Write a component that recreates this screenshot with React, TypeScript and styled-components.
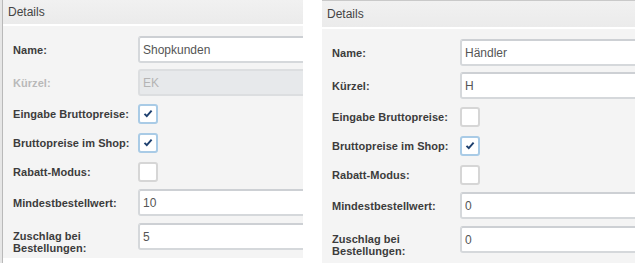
import React from 'react'
import styled, { createGlobalStyle } from 'styled-components'

const GlobalStyle = createGlobalStyle`
  html, body {
    margin: 0;
    padding: 0;
    background: #fff;
    font-family: "Liberation Sans", Arial, sans-serif;
  }
`

const Page = styled.div`
  display: flex;
  gap: 19px;
  width: 635px;
  height: 263px;
  overflow: hidden;
`

const Panel = styled.div<{ $width: number; $edge?: boolean; $top?: boolean }>`
  width: ${(p) => p.$width}px;
  flex: none;
  overflow: hidden;
  display: flex;
  flex-direction: column;
  box-sizing: border-box;
  border-top: ${(p) => (p.$top ? '1px solid #c9c9c9' : 'none')};
  border-left: ${(p) => (p.$edge ? '1px solid #b9b9b9' : 'none')};
  margin-left: ${(p) => (p.$edge ? '2px' : '0')};
  box-shadow: ${(p) => (p.$edge ? '-2px 0 0 #e6e6e6' : 'none')};
`

const Header = styled.div<{ $height: number }>`
  height: ${(p) => p.$height}px;
  line-height: ${(p) => p.$height}px;
  padding-left: 5px;
  background: linear-gradient(#f1f1f1, #ebebeb);
  border-bottom: 2px solid #ffffff;
  color: #444;
  font-size: 12px;
`

const Body = styled.div<{ $fill: boolean }>`
  background: #f4f4f4;
  padding: 7px 0 0 10px;
  height: ${(p) => (p.$fill ? 'auto' : '232px')};
  flex: ${(p) => (p.$fill ? '1' : 'none')};
  box-sizing: border-box;
`

const Row = styled.div<{ $kind: 'input' | 'check' | 'tall' }>`
  display: flex;
  align-items: ${(p) => (p.$kind === 'tall' ? 'flex-start' : 'center')};
  height: ${(p) => (p.$kind === 'check' ? 29 : 33)}px;
  padding: ${(p) => (p.$kind === 'tall' ? '4px 0 0' : '0')};
  box-sizing: border-box;
`

const Label = styled.div<{ $disabled?: boolean; $col: number; $tall?: boolean }>`
  width: ${(p) => p.$col}px;
  flex: none;
  white-space: nowrap;
  font-size: 11px;
  font-weight: bold;
  letter-spacing: 0.05px;
  line-height: 12px;
  color: ${(p) => (p.$disabled ? '#b9b9b9' : '#3c3c3c')};
  padding-top: ${(p) => (p.$tall ? '7px' : '0')};
`

const Field = styled.input`
  width: 260px;
  height: 27px;
  flex: none;
  box-sizing: border-box;
  border: 2px solid #d5d8db;
  border-top-color: #cdd0d4;
  border-radius: 3px;
  background: #fff;
  padding: 0 3px;
  font-family: "Liberation Sans", Arial, sans-serif;
  font-size: 12px;
  color: #555;
  outline: none;
  &:disabled {
    background: #e7e9eb;
    color: #b4b4b4;
    border-color: #dcdee0;
  }
`

const Box = styled.span<{ $checked: boolean }>`
  display: inline-flex;
  align-items: center;
  justify-content: center;
  width: 20px;
  height: 20px;
  box-sizing: border-box;
  border: 2px solid ${(p) => (p.$checked ? '#a9cbe6' : '#d6d6d6')};
  border-radius: 3px;
  background: #fff;
`

const Check = () => (
  <svg width="10" height="9" viewBox="0 0 10 9">
    <path d="M1.5 4.8 L3.8 7.2 L8.6 1.6" fill="none" stroke="#1d3f6e" strokeWidth="1.9" />
  </svg>
)

type Item =
  | { label: string; kind: 'input'; value: string; disabled?: boolean }
  | { label: string; kind: 'check'; checked: boolean }
  | { label: string; kind: 'tall'; value: string }

type Config = {
  width: number
  edge?: boolean
  top?: boolean
  header: number
  col: number
  fill: boolean
  items: Item[]
}

const panels: Config[] = [
  {
    width: 301,
    edge: true,
    header: 24,
    col: 125,
    fill: false,
    items: [
      { label: 'Name:', kind: 'input', value: 'Shopkunden' },
      { label: 'Kürzel:', kind: 'input', value: 'EK', disabled: true },
      { label: 'Eingabe Bruttopreise:', kind: 'check', checked: true },
      { label: 'Bruttopreise im Shop:', kind: 'check', checked: true },
      { label: 'Rabatt-Modus:', kind: 'check', checked: false },
      { label: 'Mindestbestellwert:', kind: 'input', value: '10' },
      { label: 'Zuschlag bei Bestellungen:', kind: 'tall', value: '5' },
    ],
  },
  {
    width: 313,
    top: true,
    header: 26,
    col: 128,
    fill: true,
    items: [
      { label: 'Name:', kind: 'input', value: 'Händler' },
      { label: 'Kürzel:', kind: 'input', value: 'H' },
      { label: 'Eingabe Bruttopreise:', kind: 'check', checked: false },
      { label: 'Bruttopreise im Shop:', kind: 'check', checked: true },
      { label: 'Rabatt-Modus:', kind: 'check', checked: false },
      { label: 'Mindestbestellwert:', kind: 'input', value: '0' },
      { label: 'Zuschlag bei Bestellungen:', kind: 'tall', value: '0' },
    ],
  },
]

const DetailsPanel = ({ cfg }: { cfg: Config }) => (
  <Panel $width={cfg.width} $edge={cfg.edge} $top={cfg.top}>
    <Header $height={cfg.header}>Details</Header>
    <Body $fill={cfg.fill}>
      {cfg.items.map((item) => (
        <Row key={item.label} $kind={item.kind}>
          <Label
            $col={cfg.col}
            $tall={item.kind === 'tall'}
            $disabled={item.kind === 'input' && item.disabled}
          >
            {item.kind === 'tall' ? (
              <>
                Zuschlag bei
                <br />
                Bestellungen:
              </>
            ) : (
              item.label
            )}
          </Label>
          {item.kind === 'check' ? (
            <Box $checked={item.checked}>{item.checked && <Check />}</Box>
          ) : (
            <Field
              readOnly
              value={item.value}
              disabled={item.kind === 'input' && item.disabled}
            />
          )}
        </Row>
      ))}
    </Body>
  </Panel>
)

export default function App() {
  return (
    <Page>
      <GlobalStyle />
      {panels.map((cfg, i) => (
        <DetailsPanel key={i} cfg={cfg} />
      ))}
    </Page>
  )
}
